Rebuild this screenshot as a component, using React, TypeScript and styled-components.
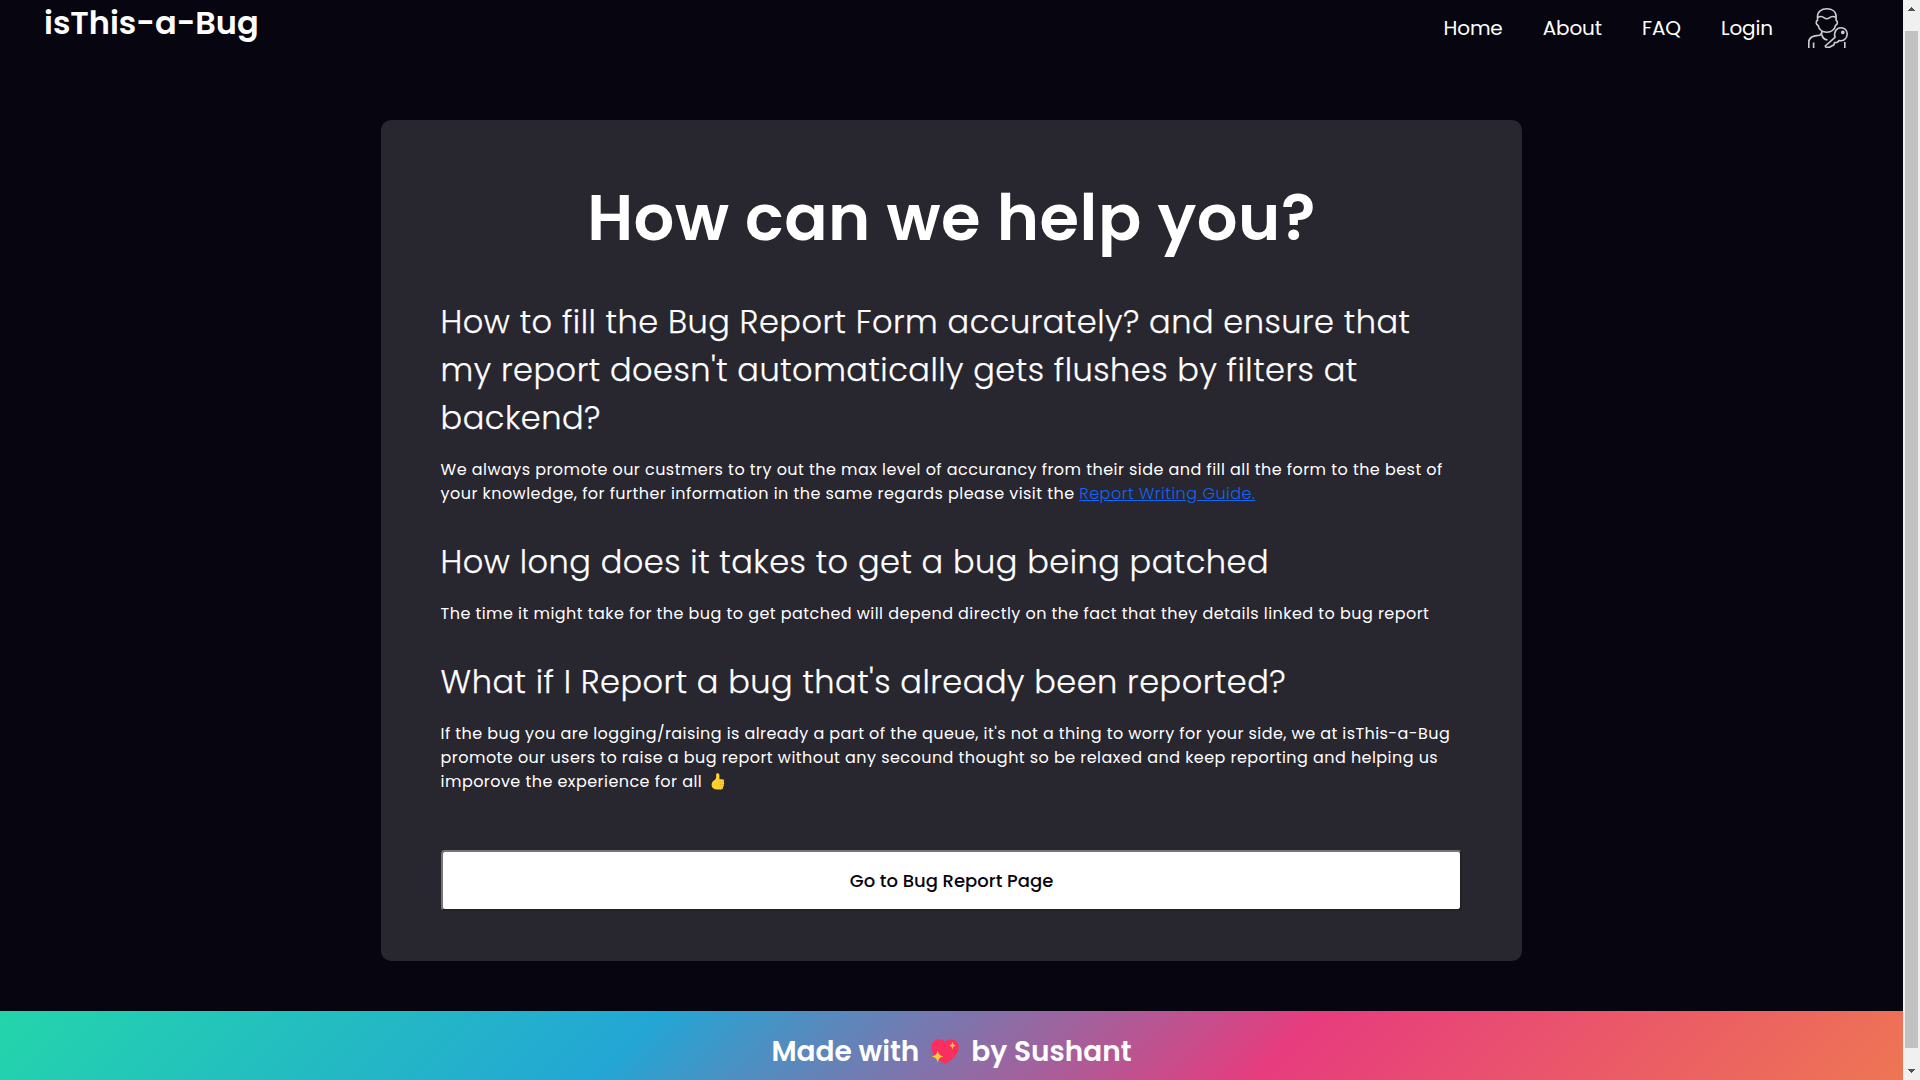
import React from 'react';
import styled, { createGlobalStyle } from 'styled-components';

const GlobalStyle = createGlobalStyle`
  * { box-sizing: border-box; }
  body {
    margin: 0;
    background: #07050f;
    color: #fff;
    font-family: Poppins, Inter, "Open Sans", sans-serif;
  }
`;

const Screen = styled.div`
  display: flex;
  height: 1080px;
  overflow: hidden;
`;

const Page = styled.div`
  flex: 1;
  min-width: 0;
  display: flex;
  flex-direction: column;
  align-items: center;
`;

const Header = styled.header`
  width: 100%;
  height: 120px;
  flex: none;
  display: flex;
  justify-content: space-between;
  align-items: flex-start;
  padding: 0 55px 0 44px;
`;

const Brand = styled.div`
  font-size: 32px;
  font-weight: 600;
  line-height: 46px;
`;

const Nav = styled.nav`
  display: flex;
  align-items: flex-start;
  gap: 40px;
  padding-top: 8px;
`;

const NavLink = styled.a`
  font-size: 20px;
  line-height: 30px;
  letter-spacing: -0.12px;
  padding-top: 5px;
  color: #fff;
`;

const Avatar = styled.svg`
  width: 40px;
  height: 40px;
  margin-left: -5px;
`;

const Card = styled.main`
  width: 60%;
  flex: none;
  height: 841px;
  padding: 50px 60px;
  background: #28262f;
  border-radius: 10px;
  letter-spacing: 0.5px;
`;

const Title = styled.h1`
  margin: 0;
  font-size: 64px;
  line-height: 96px;
  font-weight: 600;
  text-align: center;
`;

const Question = styled.h2`
  margin: 32px 0 16px;
  font-size: 32px;
  line-height: 48px;
  font-weight: 300;
  -webkit-text-stroke: 0.25px #fff;
`;

const Answer = styled.p`
  margin: 0;
  font-size: 16px;
  line-height: 24px;
  letter-spacing: 0.445px;
`;

const Tight = styled.span`
  letter-spacing: 0.42px;
`;

const GuideLink = styled.a`
  color: #1266f1;
  font-weight: 300;
  letter-spacing: 0.5px;
  text-decoration: underline;
`;

const ThumbIcon = styled.svg`
  width: 14px;
  height: 17px;
  margin-left: 4px;
  vertical-align: -3px;
`;

const ReportButton = styled.button`
  display: block;
  width: 100%;
  height: 61px;
  margin-top: 56px;
  border: 2px solid;
  border-color: #767676 #212121 #212121 #767676;
  border-radius: 4px;
  background: #fff;
  color: #07050f;
  font: 500 18px/27px Poppins, Inter, "Open Sans", sans-serif;
`;

const Footer = styled.footer`
  width: 100%;
  height: 82px;
  flex: none;
  margin-top: 50px;
  display: flex;
  justify-content: center;
  align-items: center;
  gap: 12px;
  background: linear-gradient(-45deg, #ee7752, #e73c7e, #23a6d5, #23d5ab);
  font-size: 28px;
  line-height: 42px;
  font-weight: 600;
`;

const HeartIcon = styled.svg`
  width: 28px;
  height: 26px;
`;

const ScrollBar = styled.aside`
  width: 17px;
  flex: none;
  height: 1080px;
  background: #f0f0f0;
  display: flex;
  flex-direction: column;
  align-items: center;
  padding: 7px 0;
`;

const Arrow = styled.svg`
  width: 7px;
  height: 4px;
  flex: none;
`;

const Thumb = styled.div`
  width: 13px;
  height: 1017px;
  margin: 20px 0 21px;
  background: #c1c1c1;
`;

export default function App() {
  return (
    <Screen>
      <GlobalStyle />
      <Page>
        <Header>
          <Brand>isThis-a-Bug</Brand>
          <Nav>
            <NavLink>Home</NavLink>
            <NavLink>About</NavLink>
            <NavLink>FAQ</NavLink>
            <NavLink>Login</NavLink>
            <Avatar viewBox="0 0 40 40" fill="none" stroke="#cfcfd3" strokeWidth="1.6" strokeLinecap="butt" strokeLinejoin="round">
              <path d="M9.5 13V8.5C9.5 3.6 13.5 .8 18.8 .8S28.1 3.6 28.1 8.5V13" />
              <path d="M9.5 9.6C12 8 14.5 8.3 16.3 9.8C17.8 10.9 19.8 10.9 21.3 9.8C23.1 8.3 25.6 8 28.1 9.6" />
              <path d="M9.5 12.5C7.6 13 7.8 16.6 10 17.2C11 21.5 14.6 24.3 18.8 24.3S26.6 21.5 27.6 17.2C29.8 16.6 30 13 28.1 12.5" />
              <path d="M.8 40V34.5C.8 30 3 28.6 7 27.9L11.5 27.2C13.5 26.8 14 26 14 23" />
              <path d="M13.8 26.5C14.3 29.5 16 31.4 19.5 32M5.6 34.5V40M36.8 34V40" />
              <path d="M27 29.3C25.5 24 28.5 19.7 33 19.7C36.7 19.7 39.2 22.5 39.2 26C39.2 30.5 35.5 33.5 31 32.6L29.5 34.3L26.5 34.6L26 36.8L21.5 39.2L18 39.2L17.2 38L27 29.3Z" />
              <circle cx="34.8" cy="24.3" r="1.1" fill="#cfcfd3" />
            </Avatar>
          </Nav>
        </Header>
        <Card>
          <Title>How can we help you?</Title>
          <Question>
            How to fill the Bug Report Form accurately? and ensure that my report doesn't automatically gets flushes by
            filters at backend?
          </Question>
          <Answer>
            We always promote our custmers to try out the max level of accurancy from their side and fill all the form to
            the best of your knowledge, for further information in the same regards please visit the{' '}
            <GuideLink>Report Writing Guide.</GuideLink>
          </Answer>
          <Question>How long does it takes to get a bug being patched</Question>
          <Answer>
            The time it might take for the bug to get patched will depend directly on the fact that they details linked to
            bug report
          </Answer>
          <Question>What if I Report a bug that's already been reported?</Question>
          <Answer>
            <Tight>
              If the bug you are logging/raising is already a part of the queue, it's not a thing to worry for your side,
              we at isThis-a-Bug
            </Tight>{' '}
            promote our users to raise a bug report without any secound thought so be relaxed and keep reporting and
            helping us imporove the experience for all{' '}
            <ThumbIcon viewBox="0 0 14 17">
              <path
                fill="#ffd02f"
                d="M5.200 1.200C5.400 -.1 8.300 -.1 8.400 2V6.200H11.300C13.300 6.200 13.500 8.300 12.600 8.900C13.500 9.600 13.400 11 12.500 11.500C13.200 12.300 13 13.600 12 14C12.300 15.500 11.500 16.500 10 16.500H5.500C2.200 16.500 .6 14.500 .6 11.800C.6 9.300 1.800 8.100 3.300 7.200C4.800 6.300 5.100 5 5.100 3.500Z"
              />
              <path stroke="#f0a92b" strokeWidth=".7" fill="none" d="M8.500 8.900H12.500M8.500 11.500H12.400M8.500 14H12" />
            </ThumbIcon>
          </Answer>
          <ReportButton>Go to Bug Report Page</ReportButton>
        </Card>
        <Footer>
          <span>Made with</span>
          <HeartIcon viewBox="0 0 28 26">
            <path
              fill="#fb2f5f"
              d="M14 3C11.5-.4 5.500-.7 2.300 2.500C-.6 5.700-.3 10.500 1.800 14.300C4.300 18.800 8.900 22.500 14 25C19.100 22.500 23.700 18.800 26.200 14.300C28.300 10.500 28.600 5.700 25.700 2.500C22.500-.7 16.500-.4 14 3Z"
            />
            <path
              fill="#ffcc33"
              d="M6.700 11.600C7.600 15.400 8.600 16.500 12.300 17.600C8.600 18.700 7.600 19.800 6.700 23.800C5.800 19.800 4.800 18.700 1 17.600C4.800 16.500 5.800 15.400 6.700 11.600ZM21.500 2.800C22 5.200 22.700 6 24.900 6.600C22.700 7.200 22 8 21.500 10.400C21 8 20.300 7.200 18.100 6.600C20.300 6 21 5.200 21.500 2.800Z"
            />
          </HeartIcon>
          <span>by Sushant</span>
        </Footer>
      </Page>
      <ScrollBar>
        <Arrow viewBox="0 0 7 4">
          <path fill="#505050" d="M3 0H4V1H5V2H6V3H7V4H0V3H1V2H2V1H3Z" />
        </Arrow>
        <Thumb />
        <Arrow viewBox="0 0 7 4">
          <path fill="#505050" d="M0 0H7V1H6V2H5V3H4V4H3V3H2V2H1V1H0Z" />
        </Arrow>
      </ScrollBar>
    </Screen>
  );
}
